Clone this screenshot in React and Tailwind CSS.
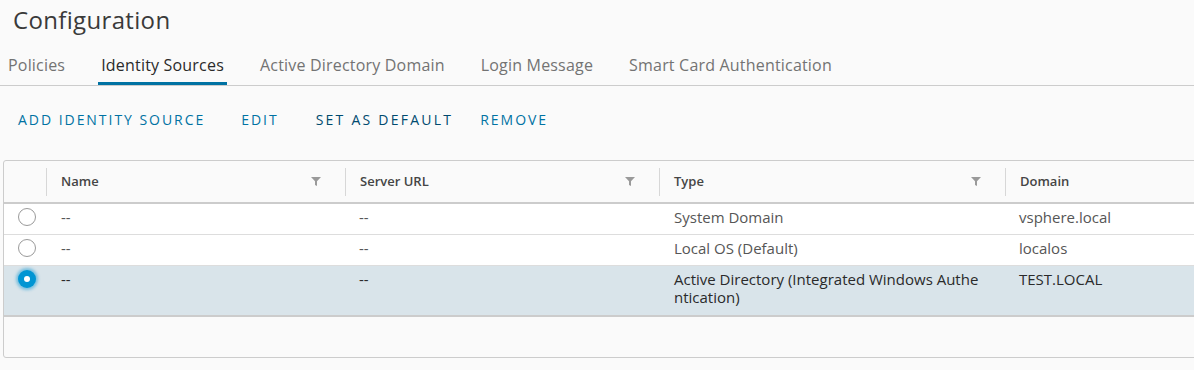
import React from "react";

const FONT = { fontFamily: "'Open Sans', Lato, sans-serif" };

function Filter() {
  return (
    <svg width="10" height="9" viewBox="0 0 10 9" className="mr-[24px] ml-auto shrink-0">
      <path d="M0 0 H10 L6 4.2 V9 L4 8 V4.2 Z" fill="#9a9a9a" />
    </svg>
  );
}

function HeadCell({ label, filter = true }) {
  return (
    <div className="flex items-center h-full">
      <div className="w-px h-[28px] bg-[#d7d7d7] shrink-0" />
      <span className="pl-[14px] text-[13px] font-semibold text-[#454545]">{label}</span>
      {filter && <Filter />}
    </div>
  );
}

function Radio({ checked }) {
  if (checked) {
    return (
      <div className="w-[18px] h-[18px] rounded-full bg-[#0095d3] flex items-center justify-center shadow-[0_0_3px_2px_rgba(0,149,211,0.45)]">
        <div className="w-[6px] h-[6px] rounded-full bg-white" />
      </div>
    );
  }
  return <div className="w-[18px] h-[18px] rounded-full border border-[#9a9a9a] bg-white" />;
}

const rows = [
  { name: "--", url: "--", type: ["System Domain"], domain: "vsphere.local" },
  { name: "--", url: "--", type: ["Local OS (Default)"], domain: "localos" },
  {
    name: "--",
    url: "--",
    type: ["Active Directory (Integrated Windows Authe", "ntication)"],
    domain: "TEST.LOCAL",
    selected: true,
  },
];

const GRID = "grid grid-cols-[42px_299px_314px_346px_1fr]";

export default function App() {
  return (
    <div className="w-[1194px] h-[370px] overflow-hidden bg-[#fafafa]" style={FONT}>
      <div className="h-[48px] pl-[13px] pt-[4px]">
        <h1 className="text-[24px] leading-[32px] tracking-[0.014em] text-[#3a3a3a] font-normal">Configuration</h1>
      </div>

      <div className="flex h-[38px] border-b border-[#cccccc] pl-[5px] gap-[30px]">
        {["Policies", "Identity Sources", "Active Directory Domain", "Login Message", "Smart Card Authentication"].map(
          (t, i) => (
            <div
              key={t}
              className={
                i === 1
                  ? "px-[3px] flex items-center border-b-[3px] border-[#0072a3] text-[16px] tracking-[0.012em] text-[#2a2a2a]"
                  : "px-[3px] flex items-center border-b-[3px] border-transparent text-[16px] tracking-[0.012em] text-[#737373]"
              }
            >
              {t}
            </div>
          )
        )}
      </div>

      <div className="flex items-center h-[36px] mt-[15px] pl-[18px] text-[14px] tracking-[0.14em] font-medium">
        <span className="text-[#0072a3]">ADD IDENTITY SOURCE</span>
        <span className="text-[#0072a3] ml-[36px]">EDIT</span>
        <span className="text-[#004a6f] ml-[37px] tracking-[0.16em]">SET AS DEFAULT</span>
        <span className="text-[#0072a3] ml-[27px]">REMOVE</span>
      </div>

      <div className="mt-[23px] ml-[3px] w-[1300px] border border-[#cccccc] rounded-[3px] bg-[#fafafa]">
        <div className={`${GRID} h-[43px] border-b-2 border-[#cccccc]`}>
          <div />
          <HeadCell label="Name" />
          <HeadCell label="Server URL" />
          <HeadCell label="Type" />
          <HeadCell label="Domain" filter={false} />
        </div>
        <div className="border-b-2 border-[#cccccc]">
          {rows.map((r, i) => (
            <div
              key={i}
              className={`${GRID} text-[15px] leading-[18px] pt-[4px] ${
                r.selected ? "bg-[#d9e4ea] text-[#2a2a2a] pb-[9px]" : "bg-white text-[#565656] pb-[8px]"
              } ${i < rows.length - 1 ? "border-b border-[#dddddd]" : ""}`}
            >
              <div className="flex justify-center pl-[4px]">
                <Radio checked={r.selected} />
              </div>
              <div className="pl-[15px]">{r.name}</div>
              <div className="pl-[14px]">{r.url}</div>
              <div className="pl-[15px]">
                {r.type.map((l) => (
                  <div key={l}>{l}</div>
                ))}
              </div>
              <div className="pl-[14px]">{r.domain}</div>
            </div>
          ))}
        </div>
        <div className="h-[40px]" />
      </div>
    </div>
  );
}
